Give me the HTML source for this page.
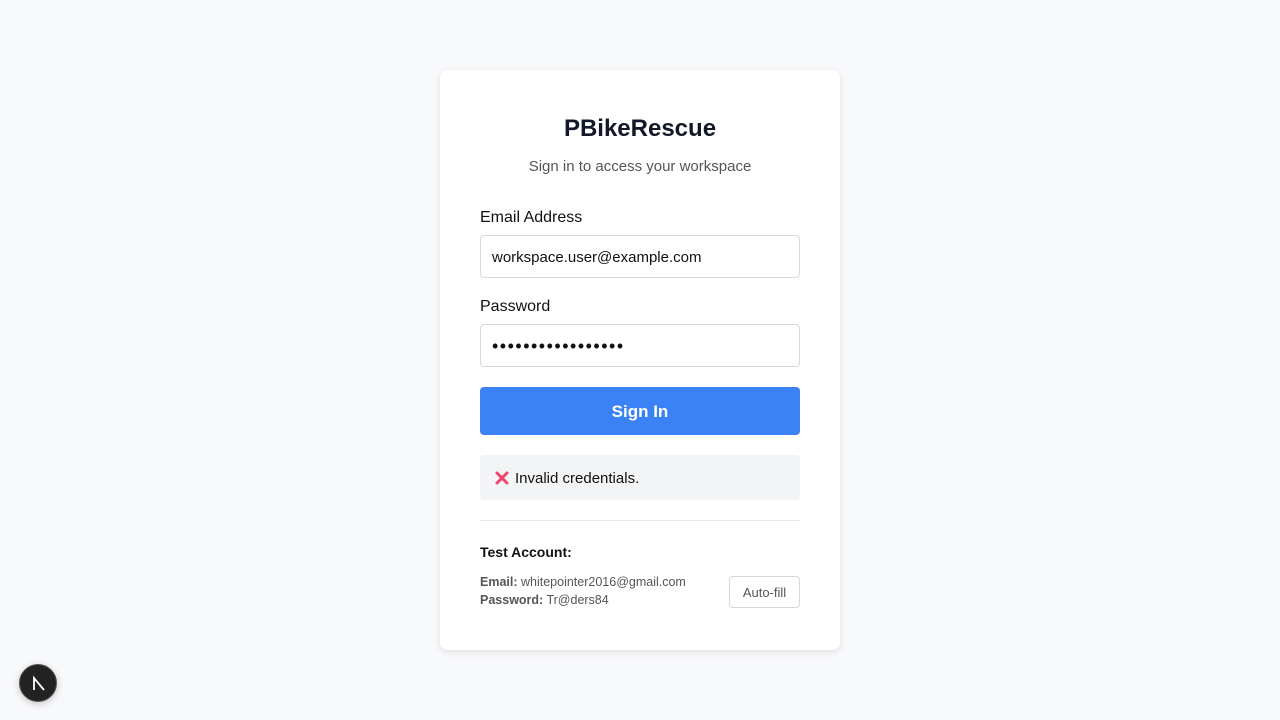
<!DOCTYPE html>
<html><head><style>
*{box-sizing:border-box;margin:0;padding:0}
body{width:1280px;height:720px;background:#f8f9fb;font-family:"Liberation Sans",sans-serif;position:relative;overflow:hidden}
.card{position:absolute;left:440px;top:70px;width:400px;height:580px;background:#fff;border-radius:8px;box-shadow:0 2px 8px rgba(0,0,0,.1)}
h1{position:absolute;top:45px;width:100%;text-align:center;font-size:24px;font-weight:bold;color:#111827}
.sub{position:absolute;top:88px;width:100%;text-align:center;font-size:15px;color:#555}
.lbl{position:absolute;left:40px;font-size:16px;color:#111}
.inp{position:absolute;left:40px;width:320px;height:43px;border:1px solid #d5d7db;border-radius:4px;padding-left:11px;line-height:43px;font-size:15px;color:#111}
.btn{position:absolute;left:40px;top:317px;width:320px;height:48px;background:#3b82f6;border-radius:4px;color:#fff;font-size:17px;font-weight:bold;text-align:center;line-height:50px}
.err{position:absolute;left:40px;top:385px;width:320px;height:45px;background:#f3f4f6;border-radius:4px;font-size:15px;color:#111;line-height:47px;padding-left:35px}
.hr{position:absolute;left:40px;top:450px;width:320px;border-top:1px solid #e5e7eb}
.small{position:absolute;left:40px;font-size:12.5px;color:#555}
.af{position:absolute;left:289px;top:506px;width:71px;height:32px;border:1px solid #d5d7db;border-radius:4px;font-size:13px;color:#555;text-align:center;line-height:31px}
.n{position:absolute;left:19px;top:664px;width:38px;height:38px;border-radius:50%;background:#222;border:1px solid #555;box-shadow:0 2px 8px rgba(0,0,0,.2)}
</style></head><body>
<div class="card">
<h1>PBikeRescue</h1>
<div class="sub">Sign in to access your workspace</div>
<div class="lbl" style="top:139px">Email Address</div>
<div class="inp" style="top:165px">workspace.user@example.com</div>
<div class="lbl" style="top:228px">Password</div>
<div class="inp" style="top:254px;font-size:18px;letter-spacing:1.5px">•••••••••••••••••</div>
<div class="btn">Sign In</div>
<div class="err"><svg style="position:absolute;left:15px;top:16px" width="14" height="14"><path d="M2 2L12 12M12 2L2 12" stroke="#f0466e" stroke-width="3" stroke-linecap="round"/></svg>Invalid credentials.</div>
<div class="hr"></div>
<div class="lbl" style="top:474px;font-size:14px;font-weight:bold">Test Account:</div>
<div class="small" style="top:505px"><b>Email:</b> whitepointer2016@gmail.com</div>
<div class="small" style="top:523px"><b>Password:</b> Tr@ders84</div>
<div class="af">Auto-fill</div>
</div>
<div class="n"><svg width="38" height="38"><path d="M14 25V13L24 25" stroke="#fff" stroke-width="1.8" fill="none"/></svg></div>
</body></html>
